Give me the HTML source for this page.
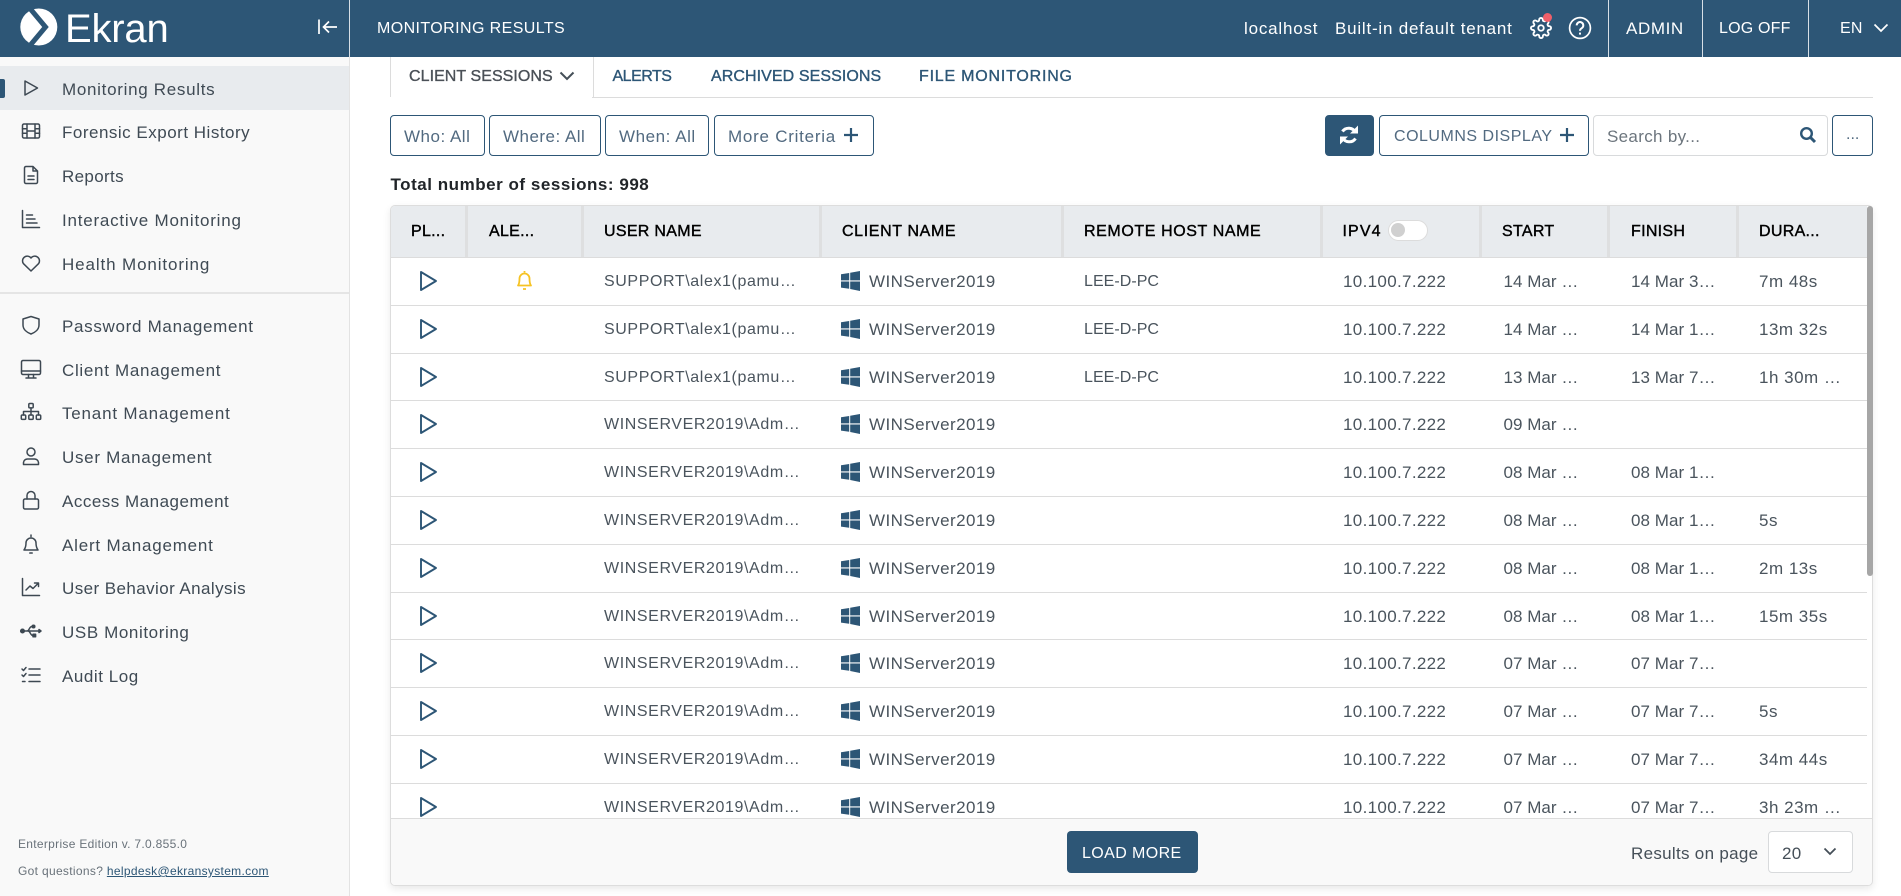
<!DOCTYPE html>
<html><head><meta charset="utf-8"><title>Ekran</title>
<style>
html,body{margin:0;padding:0;width:1901px;height:896px;overflow:hidden;background:#fff;font-family:"Liberation Sans",sans-serif;font-size:16px;color:#454f58}
div,span,a,svg{position:absolute;white-space:nowrap}
svg{overflow:visible}
.t{letter-spacing:.33px;line-height:22px}
.hd{left:0;top:0;width:1901px;height:57px;background:#2d5676}
.vl{top:0;width:1px;height:57px;background:#d7dfe6}
.w{color:#fff;top:17.5px}
.side{left:0;top:57px;width:349px;height:839px;background:#f9f9f9;border-right:1px solid #e3e3e3}
.m{left:62px;color:#3f4a54;font-size:17px;margin-top:2px;line-height:22px}
.i{left:19px;width:24px;height:24px;fill:none;stroke:#3d4852;stroke-width:1.5;stroke-linejoin:round;stroke-linecap:round}
.tab{top:65.5px;color:#2d5676;line-height:22px;-webkit-text-stroke:.35px}
.b{top:115px;height:39px;border:1px solid #2d5676;border-radius:4px;background:#fff}
.b span{top:9.5px;color:#526a80;line-height:22px;font-size:17px}
.th{top:221px;color:#000;line-height:22px;letter-spacing:.3px;-webkit-text-stroke:.4px}
.sep{top:206px;width:3px;height:51px;background:#dedfe0}
.r{left:0;width:1477px;height:46.8px;border-bottom:1px solid #dcdcdc}
.r span{top:13px;line-height:22px;color:#4a545d;font-size:17px}
.r .u{left:214px;font-size:16px;letter-spacing:.6px}.r .n{left:479px;letter-spacing:.44px}.r .h{left:694px;font-size:16px;letter-spacing:.04px}.r .p{left:953px;letter-spacing:.33px}.r .s{left:1113.500px;letter-spacing:.03px}.r .f{left:1241px;letter-spacing:.05px}.r .d{left:1369px;letter-spacing:.5px}
.pl{left:28px;top:12px;width:20px;height:22px;fill:none;stroke:#2d5676;stroke-width:1.9;stroke-linejoin:round}
.win{left:451px;top:13px;width:19px;height:20px;fill:#2d5676}
</style></head>
<body>
<svg width="0" height="0" style="left:0;top:0"><defs>
<symbol id="pl" viewBox="0 0 20 22"><path d="M3 2L18 11 3 20Z"/></symbol>
<symbol id="win" viewBox="0 0 19 20"><path d="M0 3.200L8.200 2V9.400H0ZM9.200 1.800L19 0V9.400H9.200ZM0 10.500H8.200V17.800L0 16.600ZM9.200 10.500H19V20L9.200 18Z"/></symbol>
</defs></svg>

<!-- header -->
<div class="hd"></div>
<svg style="left:20px;top:8px" width="38" height="38" viewBox="0 0 38 38"><circle cx="18.800" cy="19" r="18.500" fill="#fff"/><path d="M10 0.500L25.500 19 10 37.500" fill="none" stroke="#2d5676" stroke-width="5"/></svg>
<div style="left:65px;top:5.500px;color:#fff;font-size:40px;line-height:46px;letter-spacing:-.2px">Ekran</div>
<svg style="left:315px;top:15px" width="24" height="24" viewBox="0 0 24 24" fill="none" stroke="#fff" stroke-width="1.700"><path d="M4 4.500V19M22 12H9M14 6.500L8.500 12 14 17.500"/></svg>
<div class="vl" style="left:349px"></div>
<div class="t w" style="left:377px;letter-spacing:.41px">MONITORING RESULTS</div>
<div class="t w" style="left:1244px;font-size:17px;letter-spacing:.8px">localhost</div>
<div class="t w" style="left:1335px;font-size:17px;letter-spacing:.78px">Built-in default tenant</div>
<svg style="left:1530px;top:17px" width="22" height="22" viewBox="0 0 24 24" fill="none" stroke="#fff" stroke-width="2"><circle cx="12" cy="12" r="3"/><path d="M19.400 15a1.650 1.650 0 0 0 .330 1.820l.060.060a2 2 0 0 1 0 2.830 2 2 0 0 1-2.830 0l-.060-.060a1.650 1.650 0 0 0-1.820-.330 1.650 1.650 0 0 0-1 1.510V21a2 2 0 0 1-2 2 2 2 0 0 1-2-2v-.090A1.650 1.650 0 0 0 9 19.400a1.650 1.650 0 0 0-1.820.330l-.060.060a2 2 0 0 1-2.830 0 2 2 0 0 1 0-2.830l.060-.060a1.650 1.650 0 0 0 .330-1.820 1.650 1.650 0 0 0-1.510-1H3a2 2 0 0 1-2-2 2 2 0 0 1 2-2h.090A1.650 1.650 0 0 0 4.600 9a1.650 1.650 0 0 0-.330-1.820l-.060-.060a2 2 0 0 1 0-2.830 2 2 0 0 1 2.830 0l.060.060a1.650 1.650 0 0 0 1.820.330H9a1.650 1.650 0 0 0 1-1.510V3a2 2 0 0 1 2-2 2 2 0 0 1 2 2v.090a1.650 1.650 0 0 0 1 1.510 1.650 1.650 0 0 0 1.820-.330l.060-.060a2 2 0 0 1 2.830 0 2 2 0 0 1 0 2.830l-.060.060a1.650 1.650 0 0 0-.330 1.820V9a1.650 1.650 0 0 0 1.510 1H21a2 2 0 0 1 2 2 2 2 0 0 1-2 2h-.090a1.650 1.650 0 0 0-1.510 1z"/></svg>
<div style="left:1543px;top:13px;width:9px;height:9px;border-radius:50%;background:#ef5f6a"></div>
<svg style="left:1568px;top:16px" width="24" height="24" viewBox="0 0 24 24" fill="none" stroke="#fff" stroke-width="1.700"><circle cx="12" cy="12" r="10.400"/><path d="M8.700 9.400a3.300 3.300 0 1 1 5 2.800c-1 .600-1.700 1.200-1.700 2.600" stroke-width="2"/><path d="M12 16.600v2" stroke-width="2"/></svg>
<div class="vl" style="left:1608px"></div>
<div class="t w" style="left:1626px;font-size:17px;letter-spacing:.6px">ADMIN</div>
<div class="vl" style="left:1702px"></div>
<div class="t w" style="left:1719px;letter-spacing:.2px">LOG OFF</div>
<div class="vl" style="left:1808px"></div>
<div class="t w" style="left:1840px;letter-spacing:.2px">EN</div>
<svg style="left:1873px;top:23px" width="16" height="10" viewBox="0 0 16 10" fill="none" stroke="#fff" stroke-width="1.700"><path d="M1.500 1.500L8 8l6.500-6.500"/></svg>

<!-- sidebar -->
<div class="side"></div>
<div style="left:0;top:66px;width:349px;height:44px;background:#e8ebee"></div>
<div style="left:0;top:79px;width:5px;height:19px;background:#2d5676;border-radius:0 2px 2px 0"></div>
<svg class="i" style="top:76px" viewBox="0 0 24 24"><path d="M6 5L18.500 12 6 19Z"/></svg><div class="m" style="top:77px;letter-spacing:.7px">Monitoring Results</div>
<svg class="i" style="top:119px" viewBox="0 0 24 24"><rect x="3.500" y="5" width="17" height="14" rx="1.500"/><path d="M8 5V19M16 5V19M3.500 9.700H8M3.500 14.300H8M16 9.700H20.500M16 14.300H20.500M8 12H16"/></svg><div class="m" style="top:120px;letter-spacing:.5px">Forensic Export History</div>
<svg class="i" style="top:163px" viewBox="0 0 24 24"><path d="M5.500 5a1.500 1.500 0 0 1 1.500-1.500H14L18.500 8V19a1.500 1.500 0 0 1-1.500 1.500H7A1.500 1.500 0 0 1 5.500 19ZM14 3.500V8H18.500M9 13H15M9 16.500H15"/></svg><div class="m" style="top:164px;letter-spacing:.34px">Reports</div>
<svg class="i" style="top:207px" viewBox="0 0 24 24"><path d="M3.500 3.500V20.500H20.500M7.500 8H13.500M7.500 12H16M7.500 16H18"/></svg><div class="m" style="top:208px;letter-spacing:.78px">Interactive Monitoring</div>
<svg class="i" style="top:251px" viewBox="0 0 24 24"><path d="M12 20L4.500 12.700a4.700 4.700 0 0 1 7.500-5.700 4.700 4.700 0 0 1 7.500 5.700Z"/></svg><div class="m" style="top:252px;letter-spacing:.88px">Health Monitoring</div>
<div style="left:0;top:292px;width:349px;height:2px;background:#e5e5e5"></div>
<svg class="i" style="top:313px" viewBox="0 0 24 24"><path d="M12 3.500L20 6V12C20 16.500 16 19.500 12 21 8 19.500 4 16.500 4 12V6Z"/></svg><div class="m" style="top:314px;letter-spacing:.69px">Password Management</div>
<svg class="i" style="top:357px" viewBox="0 0 24 24"><rect x="2.500" y="3.500" width="19" height="14" rx="1.500"/><path d="M2.500 14H21.500M9.500 17.500V21M14.500 17.500V21M7 21H17"/></svg><div class="m" style="top:358px;letter-spacing:.69px">Client Management</div>
<svg class="i" style="top:400px" viewBox="0 0 24 24"><rect x="9.800" y="3.500" width="4.400" height="4.400" rx="1"/><rect x="2.300" y="15" width="4.400" height="4.400" rx="1"/><rect x="9.800" y="15" width="4.400" height="4.400" rx="1"/><rect x="17.300" y="15" width="4.400" height="4.400" rx="1"/><path d="M12 8V15M4.500 15V11.500H19.500V15"/></svg><div class="m" style="top:401px;letter-spacing:.8px">Tenant Management</div>
<svg class="i" style="top:444px" viewBox="0 0 24 24"><circle cx="12" cy="8" r="4"/><path d="M4.500 20.500V18.500a4 4 0 0 1 4-3.500H15.500a4 4 0 0 1 4 3.500V20.500Z"/></svg><div class="m" style="top:445px;letter-spacing:.7px">User Management</div>
<svg class="i" style="top:488px" viewBox="0 0 24 24"><rect x="4.500" y="11" width="15" height="10" rx="1.500"/><path d="M8 11V7.500a4 4 0 0 1 8 0V11"/></svg><div class="m" style="top:489px;letter-spacing:.5px">Access Management</div>
<svg class="i" style="top:532px" viewBox="0 0 24 24"><path d="M12 3V4.500M5 18C6.500 16 7 14 7 11a5 5 0 0 1 10 0c0 3 .500 5 2 7ZM10.800 21H13.200"/></svg><div class="m" style="top:533px;letter-spacing:.8px">Alert Management</div>
<svg class="i" style="top:575px" viewBox="0 0 24 24"><path d="M3.500 3.500V20.500H20.500M7 15L11 11 14 13.500 19 8.500M15.500 8H19.500V11.500"/></svg><div class="m" style="top:576px;letter-spacing:.42px">User Behavior Analysis</div>
<svg class="i" style="top:619px" viewBox="0 0 24 24"><circle cx="3.500" cy="12" r="1.800" fill="#3d4852"/><path d="M4 12H21M8 12C10.500 12 10 7.500 13 7.500M9 12C11.500 12 11 16.500 14 16.500"/><circle cx="14.500" cy="7.500" r="1.300" fill="#3d4852"/><rect x="14" y="15.200" width="2.600" height="2.600" fill="#3d4852"/><path d="M20 10.500L22 12 20 13.500Z" fill="#3d4852"/></svg><div class="m" style="top:620px;letter-spacing:.6px">USB Monitoring</div>
<svg class="i" style="top:663px" viewBox="0 0 24 24"><path d="M3 6L4.500 7.500 7 4.500M3 12L4.500 13.500 7 10.500M3.500 18.500H6M10 6H21M10 12H21M10 18.500H21"/></svg><div class="m" style="top:664px;letter-spacing:.55px">Audit Log</div>
<div style="left:18px;top:836px;font-size:12px;line-height:16px;color:#69727a;letter-spacing:.3px">Enterprise Edition v. 7.0.855.0</div>
<div style="left:18px;top:863px;font-size:12px;line-height:16px;color:#69727a;letter-spacing:.32px">Got questions? <span style="position:static;color:#2d5676;text-decoration:underline">helpdesk@ekransystem.com</span></div>

<!-- tabs -->
<div style="left:390px;top:57px;width:202px;height:40px;border-left:1px solid #dcdcdc;border-right:1px solid #dcdcdc"></div>
<div style="left:592px;top:97px;width:1281px;height:1px;background:#dcdcdc"></div>
<div class="tab" style="left:409px;color:#4a5057;letter-spacing:.06px">CLIENT SESSIONS</div>
<svg style="left:559px;top:71px" width="16" height="10" viewBox="0 0 16 10" fill="none" stroke="#454f58" stroke-width="2"><path d="M1.500 1.500L8 8l6.500-6.500"/></svg>
<div class="tab" style="left:612.500px;letter-spacing:-.5px">ALERTS</div>
<div class="tab" style="left:711px;letter-spacing:.08px">ARCHIVED SESSIONS</div>
<div class="tab" style="left:919px;letter-spacing:.79px">FILE MONITORING</div>

<!-- filters -->
<div class="b" style="left:390px;width:93px"><span style="left:13px;letter-spacing:.5px">Who: All</span></div>
<div class="b" style="left:489px;width:110px"><span style="left:13px;letter-spacing:.48px">Where: All</span></div>
<div class="b" style="left:605px;width:102px"><span style="left:13px;letter-spacing:.55px">When: All</span></div>
<div class="b" style="left:714px;width:158px"><span style="left:13px;letter-spacing:.75px">More Criteria</span>
<svg style="left:129px;top:12px" width="14" height="14" viewBox="0 0 14 14" stroke="#2d5676" stroke-width="2.200"><path d="M7 0V14M0 7H14"/></svg></div>
<div class="b" style="left:1325px;width:47px;background:#2d5676"></div>
<svg style="left:1337px;top:123px" width="24" height="24" viewBox="0 0 24 24" fill="none" stroke="#fff" stroke-width="3"><path d="M18.500 9.500A7.500 7.500 0 0 0 5.500 8.500M5.500 14.500A7.500 7.500 0 0 0 18.500 15.500"/><path d="M21 2.500V10.500H13ZM3 21.500V13.500H11Z" fill="#fff" stroke="none"/></svg>
<div class="b" style="left:1379px;width:208px"><span style="left:14px;font-size:16px;letter-spacing:.51px">COLUMNS DISPLAY</span>
<svg style="left:180px;top:12px" width="14" height="14" viewBox="0 0 14 14" stroke="#2d5676" stroke-width="2.200"><path d="M7 0V14M0 7H14"/></svg></div>
<div class="b" style="left:1593px;width:233px;border-color:#d8dadc"><span style="left:13px;color:#6c757d;letter-spacing:.32px">Search by...</span>
<svg style="left:205px;top:10px" width="18" height="18" viewBox="0 0 18 18" fill="none" stroke="#2d5676"><circle cx="7.500" cy="7.500" r="5.300" stroke-width="2.400"/><path d="M11.500 11.500L16 16" stroke-width="3"/></svg></div>
<div class="b" style="left:1832px;width:39px"><span style="left:13px;top:8px;font-size:16px;letter-spacing:0">...</span></div>
<div class="t" style="left:390.500px;top:174px;font-weight:bold;font-size:17px;color:#212529;letter-spacing:.53px">Total number of sessions: 998</div>

<!-- table -->
<div style="left:390px;top:205px;width:1481px;height:679px;border:1px solid #dddddd;border-radius:5px;box-shadow:0 3px 8px rgba(0,0,0,.09);background:#fff"></div>
<div style="left:391px;top:206px;width:1476px;height:51px;background:#e8ebee;border-radius:4px 0 0 0"></div>
<div style="left:391px;top:257px;width:1476px;height:1px;background:#dcdcdc"></div>
<div class="sep" style="left:465px"></div><div class="sep" style="left:581px"></div><div class="sep" style="left:819px"></div><div class="sep" style="left:1061px"></div><div class="sep" style="left:1320px"></div><div class="sep" style="left:1479px"></div><div class="sep" style="left:1607px"></div><div class="sep" style="left:1736px"></div>
<div class="th" style="left:411px">PL...</div>
<div class="th" style="left:489px">ALE...</div>
<div class="th" style="left:604px">USER NAME</div>
<div class="th" style="left:842px;letter-spacing:.63px">CLIENT NAME</div>
<div class="th" style="left:1084px;letter-spacing:.6px">REMOTE HOST NAME</div>
<div class="th" style="left:1342.500px;letter-spacing:1.1px">IPV4</div>
<div style="left:1388px;top:220px;width:38px;height:19px;border:1px solid #dcdcdc;border-radius:11px;background:#fff"></div>
<div style="left:1391px;top:223px;width:14px;height:14px;border-radius:50%;background:#d0d0d0"></div>
<div class="th" style="left:1502px">START</div>
<div class="th" style="left:1631px">FINISH</div>
<div class="th" style="left:1759px">DURA...</div>
<div style="left:1867px;top:206px;width:6px;height:370px;background:#a6a6a6;border-radius:3px"></div>

<div style="left:390px;top:258px;width:1477px;height:560px;overflow:hidden">
<div class="r" style="top:0"><svg class="pl"><use href="#pl"/></svg>
<svg style="left:124px;top:12px" width="21" height="22" viewBox="0 0 21 22" fill="none" stroke="#f6c324" stroke-width="1.800" stroke-linejoin="round"><path d="M10.500 1V2.500M4 15.500C5.200 14 5.500 12 5.500 8.500a5 5 0 0 1 10 0c0 3.500.300 5.500 1.500 7ZM9 19H12"/></svg>
<span class="u">SUPPORT\alex1(pamu…</span><svg class="win"><use href="#win"/></svg><span class="n">WINServer2019</span><span class="h">LEE-D-PC</span><span class="p">10.100.7.222</span><span class="s">14 Mar …</span><span class="f">14 Mar 3…</span><span class="d">7m 48s</span></div>
<div class="r" style="top:47.800px"><svg class="pl"><use href="#pl"/></svg><span class="u">SUPPORT\alex1(pamu…</span><svg class="win"><use href="#win"/></svg><span class="n">WINServer2019</span><span class="h">LEE-D-PC</span><span class="p">10.100.7.222</span><span class="s">14 Mar …</span><span class="f">14 Mar 1…</span><span class="d">13m 32s</span></div>
<div class="r" style="top:95.600px"><svg class="pl"><use href="#pl"/></svg><span class="u">SUPPORT\alex1(pamu…</span><svg class="win"><use href="#win"/></svg><span class="n">WINServer2019</span><span class="h">LEE-D-PC</span><span class="p">10.100.7.222</span><span class="s">13 Mar …</span><span class="f">13 Mar 7…</span><span class="d">1h 30m …</span></div>
<div class="r" style="top:143.400px"><svg class="pl"><use href="#pl"/></svg><span class="u">WINSERVER2019\Adm…</span><svg class="win"><use href="#win"/></svg><span class="n">WINServer2019</span><span class="p">10.100.7.222</span><span class="s">09 Mar …</span></div>
<div class="r" style="top:191.200px"><svg class="pl"><use href="#pl"/></svg><span class="u">WINSERVER2019\Adm…</span><svg class="win"><use href="#win"/></svg><span class="n">WINServer2019</span><span class="p">10.100.7.222</span><span class="s">08 Mar …</span><span class="f">08 Mar 1…</span></div>
<div class="r" style="top:239px"><svg class="pl"><use href="#pl"/></svg><span class="u">WINSERVER2019\Adm…</span><svg class="win"><use href="#win"/></svg><span class="n">WINServer2019</span><span class="p">10.100.7.222</span><span class="s">08 Mar …</span><span class="f">08 Mar 1…</span><span class="d">5s</span></div>
<div class="r" style="top:286.800px"><svg class="pl"><use href="#pl"/></svg><span class="u">WINSERVER2019\Adm…</span><svg class="win"><use href="#win"/></svg><span class="n">WINServer2019</span><span class="p">10.100.7.222</span><span class="s">08 Mar …</span><span class="f">08 Mar 1…</span><span class="d">2m 13s</span></div>
<div class="r" style="top:334.600px"><svg class="pl"><use href="#pl"/></svg><span class="u">WINSERVER2019\Adm…</span><svg class="win"><use href="#win"/></svg><span class="n">WINServer2019</span><span class="p">10.100.7.222</span><span class="s">08 Mar …</span><span class="f">08 Mar 1…</span><span class="d">15m 35s</span></div>
<div class="r" style="top:382.400px"><svg class="pl"><use href="#pl"/></svg><span class="u">WINSERVER2019\Adm…</span><svg class="win"><use href="#win"/></svg><span class="n">WINServer2019</span><span class="p">10.100.7.222</span><span class="s">07 Mar …</span><span class="f">07 Mar 7…</span></div>
<div class="r" style="top:430.200px"><svg class="pl"><use href="#pl"/></svg><span class="u">WINSERVER2019\Adm…</span><svg class="win"><use href="#win"/></svg><span class="n">WINServer2019</span><span class="p">10.100.7.222</span><span class="s">07 Mar …</span><span class="f">07 Mar 7…</span><span class="d">5s</span></div>
<div class="r" style="top:478px"><svg class="pl"><use href="#pl"/></svg><span class="u">WINSERVER2019\Adm…</span><svg class="win"><use href="#win"/></svg><span class="n">WINServer2019</span><span class="p">10.100.7.222</span><span class="s">07 Mar …</span><span class="f">07 Mar 7…</span><span class="d">34m 44s</span></div>
<div class="r" style="top:525.800px"><svg class="pl"><use href="#pl"/></svg><span class="u">WINSERVER2019\Adm…</span><svg class="win"><use href="#win"/></svg><span class="n">WINServer2019</span><span class="p">10.100.7.222</span><span class="s">07 Mar …</span><span class="f">07 Mar 7…</span><span class="d">3h 23m …</span></div>
</div>

<!-- footer -->
<div style="left:391px;top:818px;width:1481px;height:66px;background:#f9f9f9;border-top:1px solid #dcdcdc;border-radius:0 0 4px 4px"></div>
<div style="left:1067px;top:831px;width:131px;height:42px;background:#2d5676;border-radius:4px"></div>
<div class="t" style="left:1082px;top:843px;color:#fff;letter-spacing:.4px">LOAD MORE</div>
<div class="t" style="left:1631px;top:843px;font-size:17px;color:#454f58;letter-spacing:.3px">Results on page</div>
<div style="left:1768px;top:831px;width:83px;height:40px;background:#fff;border:1px solid #d8dadc;border-radius:4px"></div>
<div class="t" style="left:1782px;top:843px;font-size:17px;letter-spacing:.3px">20</div>
<svg style="left:1823px;top:847px" width="14" height="9" viewBox="0 0 14 9" fill="none" stroke="#454f58" stroke-width="1.800"><path d="M1.500 1.500L7 7l5.500-5.500"/></svg>
</body></html>
